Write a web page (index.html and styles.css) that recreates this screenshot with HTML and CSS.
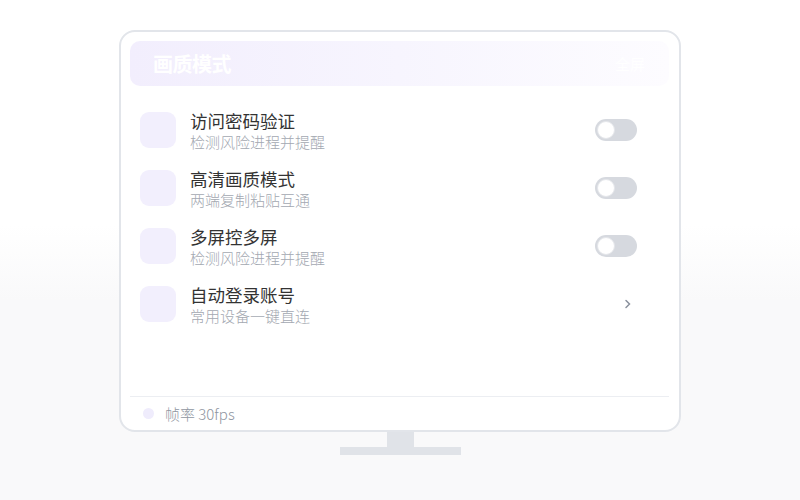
FILE: index.html
```html
<!DOCTYPE html>
<html lang="zh">
<head>
    <meta charset="UTF-8">
    <meta name="viewport" content="width=device-width, initial-scale=1.0">
    <title>画质模式</title>
    <link rel="stylesheet" href="styles.css">
</head>
<body>
    <div class="monitor">
        <div class="screen">
            <div class="header">
                <h1>画质模式</h1>
                <span class="header-tag">全屏</span>
            </div>

            <div class="list">
                <div class="row">
                    <div class="row-icon"></div>
                    <div class="row-text">
                        <div class="row-title">访问密码验证</div>
                        <div class="row-sub">检测风险进程并提醒</div>
                    </div>
                    <div class="toggle"><span class="knob"></span></div>
                </div>
                <div class="row">
                    <div class="row-icon"></div>
                    <div class="row-text">
                        <div class="row-title">高清画质模式</div>
                        <div class="row-sub">两端复制粘贴互通</div>
                    </div>
                    <div class="toggle"><span class="knob"></span></div>
                </div>
                <div class="row">
                    <div class="row-icon"></div>
                    <div class="row-text">
                        <div class="row-title">多屏控多屏</div>
                        <div class="row-sub">检测风险进程并提醒</div>
                    </div>
                    <div class="toggle"><span class="knob"></span></div>
                </div>
                <div class="row">
                    <div class="row-icon"></div>
                    <div class="row-text">
                        <div class="row-title">自动登录账号</div>
                        <div class="row-sub">常用设备一键直连</div>
                    </div>
                    <svg class="chevron" width="8" height="12" viewBox="0 0 8 12">
                        <path d="M2 2.5 L5.5 6 L2 9.5" fill="none" stroke="#8a919d" stroke-width="1.5" stroke-linecap="round"/>
                    </svg>
                </div>
            </div>

            <div class="footer">
                <span class="footer-dot"></span>
                <span class="footer-text">帧率 30fps</span>
            </div>
        </div>
        <div class="neck"></div>
        <div class="base"></div>
    </div>
</body>
</html>
```

FILE: styles.css
```css
/* 기본 */
html {
    min-height: 100%;
    background: linear-gradient(180deg, #fff 0%, #fff 45%, #f9f9fa 60%, #f9f9fa 100%);
}
body {
    margin: 0;
    font-family: "Noto Sans CJK SC", "Noto Sans", sans-serif;
    color: #333;
}

.monitor {
    width: 562px;
    margin: 30px auto 0;
    display: flex;
    flex-direction: column;
    align-items: center;
}

.screen {
    box-sizing: border-box;
    width: 562px;
    height: 402px;
    border: 2px solid #e2e5ea;
    border-radius: 16px;
    padding: 9px 10px 0 9px;
    display: flex;
    flex-direction: column;
    background: #fff;
}

/* 헤더 */
.header {
    height: 45px;
    border-radius: 10px;
    background: linear-gradient(90deg, #f2eefd 0%, #f7f5fe 50%, #fdfcff 100%);
    display: flex;
    align-items: center;
    justify-content: space-between;
    padding: 0 22px 0 23px;
}
.header h1 {
    margin: 0;
    font-size: 20px;
    font-weight: 700;
    color: #fff;
    letter-spacing: -0.5px;
}
.header-tag {
    font-size: 15px;
    color: #fff;
    margin-right: 2px;
}

/* 목록 */
.list {
    margin-top: 15px;
    flex: 1;
}
.row {
    height: 58px;
    display: flex;
    align-items: center;
    padding: 0 32px 0 10px;
}
.row-icon {
    width: 36px;
    height: 36px;
    border-radius: 9px;
    background: #f2effd;
    flex-shrink: 0;
}
.row-text {
    flex: 1;
    margin-left: 14px;
    display: flex;
    flex-direction: column;
}
.row-title {
    font-size: 17.5px;
    line-height: 22px;
    font-weight: 400;
    color: #333;
}
.row-sub {
    font-size: 15px;
    line-height: 19px;
    font-weight: 300;
    color: #a3a8b1;
}

/* 토글 */
.toggle {
    width: 42px;
    height: 22px;
    border-radius: 11px;
    background: #d6d9df;
    position: relative;
    flex-shrink: 0;
}
.knob {
    position: absolute;
    left: 2px;
    top: 2px;
    box-sizing: border-box;
    width: 18px;
    height: 18px;
    border-radius: 50%;
    background: #fff;
    border: 1px solid #e4e6ea;
}
.chevron {
    margin-right: 5px;
}

/* 하단 */
.footer {
    border-top: 1px solid #eceef2;
    height: 33px;
    display: flex;
    align-items: center;
    padding-left: 13px;
}
.footer-dot {
    width: 11px;
    height: 11px;
    border-radius: 50%;
    background: #efecfc;
}
.footer-text {
    margin-left: 11px;
    font-size: 15px;
    font-weight: 300;
    color: #8f96a1;
}

/* 받침대 */
.neck {
    width: 27px;
    height: 15px;
    background: #e0e3e8;
}
.base {
    width: 121px;
    height: 8px;
    background: #e0e3e8;
}
```
